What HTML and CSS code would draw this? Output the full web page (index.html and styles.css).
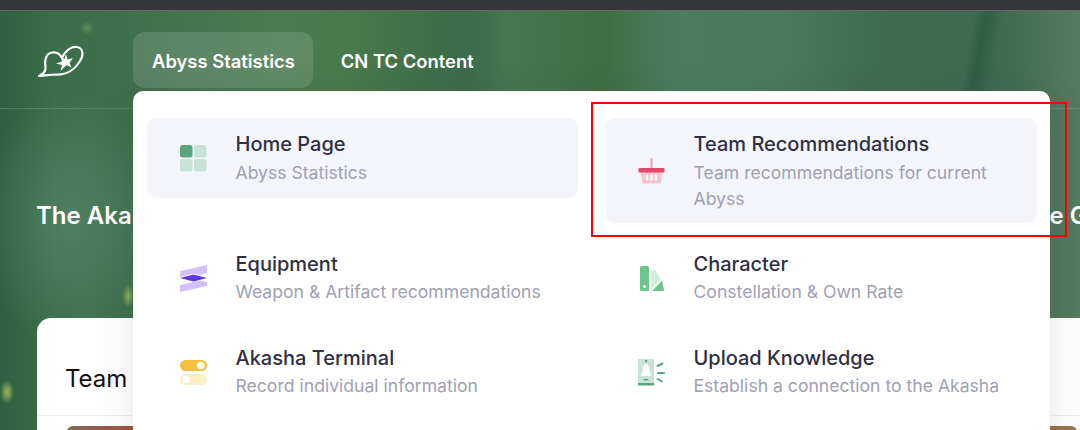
FILE: index.html
```html
<!DOCTYPE html>
<html lang="en">
<head>
    <meta charset="UTF-8">
    <title>Akasha Terminal</title>
    <link rel="stylesheet" href="styles.css">
</head>
<body>
    <div class="topbar"></div>
    <div class="hero">
        <div class="nav">
            <svg class="logo" width="46" height="32" viewBox="0 0 46 32">
                <path d="M1 31C5 29 8 27 7.500 21C6.500 15 8 8.500 14 7.500C19 6.800 22 9 24 13C27 6 33 1 39 2C45 3 46 10 42 16C38 23 30 30 18 29.500C11 29.500 5 31 1 31Z" fill="none" stroke="#fff" stroke-width="2.200" stroke-linejoin="round"/>
                <path d="M28 9L29.500 14.500L35 13L31.500 18L33.500 22.500L28.500 20L22.500 26L24 20L18 18.500L24 16.500L23 12L26.500 14Z" fill="#fff"/>
            </svg>
            <a class="tab act">Abyss Statistics</a>
            <a class="tab">CN TC Content</a>
        </div>
        <h1 class="title"><span>The Akasha</span><span>the Game Guide</span></h1>
        <div class="panel">
            <div class="panel-head">Team</div>
            <div class="panel-row">
                <div class="thumb thumb-red"></div>
                <div class="thumb thumb-tan"></div>
            </div>
        </div>

        <div class="menu">
            <a class="item on">
                <svg class="ico" width="27" height="27" viewBox="0 0 27 27">
                    <rect width="12.500" height="12.500" rx="2.500" fill="#5aa57e"/>
                    <rect x="14" width="12.500" height="12.500" rx="2.500" fill="#c8e2da"/>
                    <rect y="14" width="12.500" height="12.500" rx="2.500" fill="#c8e2da"/>
                    <rect x="14" y="14" width="12.500" height="12.500" rx="2.500" fill="#c8e2da"/>
                </svg>
                <div><b>Home Page</b><p>Abyss Statistics</p></div>
            </a>
            <a class="item on">
                <svg class="ico" width="27" height="27" viewBox="0 0 27 27">
                    <rect x="12.500" y="0" width="2" height="12" fill="#f2a5b5"/>
                    <path d="M2.500 14H24.500L22.500 25.500H4.500Z" fill="#f6c3cf"/>
                    <rect x="0.500" y="10" width="26" height="4.500" rx="1" fill="#e5486c"/>
                    <rect x="8" y="16.500" width="2.200" height="6" fill="#fff"/>
                    <rect x="12.400" y="16.500" width="2.200" height="6" fill="#fff"/>
                    <rect x="16.800" y="16.500" width="2.200" height="6" fill="#fff"/>
                </svg>
                <div><b>Team Recommendations</b><p>Team recommendations for current Abyss</p></div>
            </a>
            <a class="item">
                <svg class="ico" width="27" height="27" viewBox="0 0 27 27">
                    <path d="M0 6L27 0V8L20 10L13.500 8.500L0 12Z" fill="#d3c0f8"/>
                    <path d="M0 20L13.500 17L20 15.500L27 17V21L0 27Z" fill="#d3c0f8"/>
                    <path d="M0 13L13.500 9.500L27 13L13.500 16.500Z" fill="#6236e6"/>
                </svg>
                <div><b>Equipment</b><p>Weapon &amp; Artifact recommendations</p></div>
            </a>
            <a class="item">
                <svg class="ico" width="27" height="27" viewBox="0 0 27 27">
                    <rect x="2" y="1" width="9" height="25" rx="1.500" fill="#6cc58d"/>
                    <circle cx="6.500" cy="21.500" r="1.500" fill="#fff"/>
                    <path d="M12.500 6L17 4.500L23 14.500L13 24.500Z" fill="#d2eedc"/>
                    <path d="M14 26L24 15.500L26 25V26Z" fill="#6cc58d"/>
                </svg>
                <div><b>Character</b><p>Constellation &amp; Own Rate</p></div>
            </a>
            <a class="item">
                <svg class="ico" width="27" height="27" viewBox="0 0 27 27">
                    <rect y="1" width="27" height="11" rx="5.500" fill="#f5bf3f"/>
                    <circle cx="20.700" cy="6.500" r="3.800" fill="#fff"/>
                    <rect y="15" width="27" height="11" rx="5.500" fill="#fdeec9"/>
                    <circle cx="5.700" cy="20.500" r="3.800" fill="#fff"/>
                </svg>
                <div><b>Akasha Terminal</b><p>Record individual information</p></div>
            </a>
            <a class="item">
                <svg class="ico" width="27" height="27" viewBox="0 0 27 27">
                    <rect x="0" y="0" width="16" height="26" fill="#c9e3d8"/>
                    <rect x="0" y="24" width="16" height="2.500" fill="#5aa57e"/>
                    <circle cx="8" cy="2" r="1.300" fill="#5aa57e"/>
                    <rect x="5.500" y="20" width="5" height="1.400" fill="#5aa57e"/>
                    <path d="M8 5C10.500 5 11 8 11.300 11C11.500 14 13 15 13 17H3C3 15 4.500 14 4.700 11C5 8 5.500 5 8 5Z" fill="#fff"/>
                    <path d="M19.500 7L24.500 4.500M20 14H26M19.500 20L24 22.500" stroke="#5aa57e" stroke-width="2" stroke-linecap="round" fill="none"/>
                </svg>
                <div><b>Upload Knowledge</b><p>Establish a connection to the Akasha</p></div>
            </a>
        </div>

        <div class="mark"></div>
    </div>
</body>
</html>
```

FILE: styles.css
```css
*{
    box-sizing: border-box;
}
html,body{
    margin: 0;
    height: 100%;
    overflow: hidden;
}
body{
    font-family: Inter, "Liberation Sans", sans-serif;
    background: #fff;
}
.topbar{
    height: 11px;
    background: #33373a;
    border-bottom: 1px solid #66686a;
}
.hero{
    position: relative;
    height: 419px;
    overflow: hidden;
    background:
        radial-gradient(circle at 87px 17px, rgba(130,170,100,.5), rgba(130,170,100,0) 7px),
        radial-gradient(ellipse 6px 12px at 128px 285px, rgba(190,205,90,.65), rgba(190,205,90,0)),
        radial-gradient(ellipse 7px 12px at 7px 381px, rgba(200,215,100,.75), rgba(200,215,100,0)),
        radial-gradient(ellipse 90px 130px at 70px 210px, rgba(95,140,115,.6), rgba(95,140,115,0)),
        linear-gradient(100deg, rgba(30,70,45,0) 84.500%, rgba(30,80,55,.45) 85.500%, rgba(30,80,55,0) 87%),
        linear-gradient(90deg, #2f6040 0, #3b6d48 5%, #41704c 12%, #4a7a50 25%, #497a4c 32%, #3d6a48 43%, #477650 47%, #3f7044 56%, #4b7d5f 63%, #4a7a5d 72%, #406b50 82%, #3f6850 92%, #557c5e 100%);
}
.nav{
    display: flex;
    align-items: center;
    height: 98px;
    padding: 21px 0 21px 38px;
    border-bottom: 1px solid rgba(255,255,255,.14);
}
.logo{
    margin-right: 49px;
    margin-top: 2px;
}
.tab{
    display: flex;
    align-items: center;
    height: 56px;
    padding: 2px 18px 0 19px;
    font-size: 18.400px;
    font-weight: 600;
    color: #fff;
    border-radius: 12px;
    margin-right: 9px;
}
.tab.act{
    background: rgba(255,255,255,.13);
}
.title{
    display: flex;
    gap: 853px;
    margin: 92px 0 0 36px;
    font-size: 24px;
    line-height: 30px;
    font-weight: 600;
    color: #fff;
    white-space: nowrap;
}
.panel{
    width: 1100px;
    margin: 87px 0 0 37px;
    background: #fff;
    border-radius: 14px 14px 0 0;
}
.panel-head{
    height: 98px;
    padding: 46px 28px 0;
    font-size: 24px;
    line-height: 30px;
    color: #111;
    border-bottom: 1px solid #eeeef2;
}
.panel-row{
    display: flex;
    justify-content: space-between;
    padding: 10px 60px 0 30px;
}
.thumb{
    height: 40px;
    border-radius: 6px;
}
.thumb-red{
    width: 240px;
    background: linear-gradient(90deg, #7c6a58, #b0503c 30%, #a8463a 60%, #8a6a50);
}
.thumb-tan{
    width: 180px;
    background: linear-gradient(90deg, #6a5040, #a07850);
}
.menu{
    position: absolute;
    left: 133px;
    top: 80px;
    width: 917px;
    height: 400px;
    padding: 27px 13px 0 14px;
    display: grid;
    grid-template-columns: 431px 432px;
    column-gap: 27px;
    row-gap: 14px;
    align-items: start;
    align-content: start;
    background: #fff;
    border-radius: 10px;
    box-shadow: 0 10px 40px rgba(40,40,80,.12);
}
.item{
    display: flex;
    align-items: center;
    min-height: 80px;
    padding: 12px 28px 12px 33px;
    border-radius: 10px;
}
.item.on{
    background: #f4f5fa;
    margin-bottom: 1px;
    padding-bottom: 11px;
}
.item div{
    align-self: flex-start;
}
.ico{
    flex: none;
    margin-right: 28.500px;
}
.item b{
    display: block;
    font-size: 20px;
    line-height: 29px;
    font-weight: 500;
    color: #2f2f45;
}
.item.on b{
    margin-bottom: 1px;
}
.item p{
    margin: 0;
    font-size: 17.600px;
    line-height: 26px;
    color: #a0a0b5;
}
.mark{
    position: absolute;
    left: 591px;
    top: 91px;
    width: 476px;
    height: 135px;
    border: 2px solid #f00;
}
```
